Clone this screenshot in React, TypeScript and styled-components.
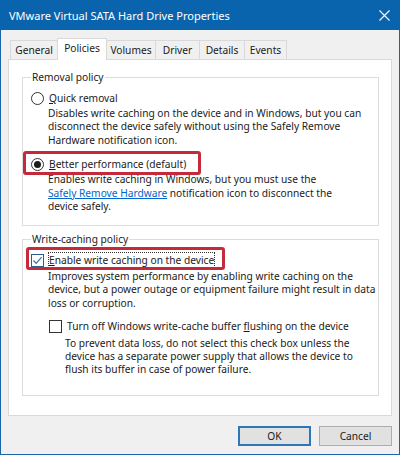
import * as React from "react";
import styled, { createGlobalStyle } from "styled-components";

const GlobalStyle = createGlobalStyle`
  html, body {
    margin: 0;
    padding: 0;
    background: #f0f0f0;
  }
  * {
    box-sizing: border-box;
  }
`;

const Window = styled.div`
  width: 400px;
  height: 455px;
  display: flex;
  flex-direction: column;
  background: #f0f0f0;
  border: 1px solid #1a64a8;
  border-top: none;
  font-family: "Noto Sans", "Open Sans", sans-serif;
  font-size: 10.2px;
  color: #1b1b1b;
`;

const TitleBar = styled.div`
  height: 30px;
  flex: none;
  display: flex;
  align-items: center;
  justify-content: space-between;
  background: #0a64ad;
  color: #ffffff;
  padding: 0 9px 0 9px;
  margin: 0 -1px;
  font-size: 11px;
`;

const CloseButton = styled.div`
  width: 14px;
  height: 14px;
  display: flex;
  align-items: center;
  justify-content: center;
`;

const Body = styled.div`
  flex: 1;
  display: flex;
  flex-direction: column;
  padding: 8px 7px 0 7px;
`;

const TabStrip = styled.div`
  display: flex;
  align-items: flex-end;
  height: 21px;
  padding-left: 2px;
  position: relative;
  z-index: 1;
`;

const Tab = styled.div<{ $width: number; $active?: boolean; $last?: boolean; $afterActive?: boolean }>`
  width: ${(p) => p.$width}px;
  height: ${(p) => (p.$active ? 22 : 19)}px;
  margin-bottom: ${(p) => (p.$active ? -1 : 0)}px;
  display: flex;
  align-items: center;
  justify-content: center;
  padding-bottom: ${(p) => (p.$active ? 3 : 0)}px;
  background: ${(p) => (p.$active ? "#ffffff" : "#f0f0f0")};
  border: 1px solid #d9d9d9;
  border-bottom: none;
  border-right: ${(p) => (p.$last || p.$active ? "1px solid #d9d9d9" : "none")};
  border-left: ${(p) => (p.$afterActive ? "none" : "1px solid #d9d9d9")};
  cursor: default;
`;

const Panel = styled.div`
  height: 357px;
  display: flex;
  flex-direction: column;
  gap: 6px;
  background: #ffffff;
  border: 1px solid #d9d9d9;
  padding: 10px 12px 19px 13px;
`;

const Group = styled.fieldset<{ $grow?: boolean }>`
  margin: 0;
  border: 1px solid #dcdcdc;
  padding: 6px 0 0 8px;
  flex: ${(p) => (p.$grow ? 1 : "none")};
  padding-bottom: ${(p) => (p.$grow ? 0 : 12)}px;
  min-width: 0;
`;

const Legend = styled.legend`
  padding: 0 1px;
  margin-left: 0;
  line-height: 14px;
`;

const OptionRow = styled.div<{ $indent?: number; $gapTop?: number }>`
  display: inline-flex;
  align-items: center;
  gap: 4px;
  height: 16px;
  margin-left: ${(p) => p.$indent ?? 0}px;
  margin-top: ${(p) => p.$gapTop ?? 0}px;
  position: relative;
  line-height: 16px;
  white-space: nowrap;
  cursor: default;
`;

const Highlight = styled.div<{ $top: number; $right: number; $bottom: number; $left: number }>`
  position: absolute;
  top: ${(p) => -p.$top}px;
  right: ${(p) => -p.$right}px;
  bottom: ${(p) => -p.$bottom}px;
  left: ${(p) => -p.$left}px;
  border: 3px solid #c52a3a;
  border-radius: 3px;
  pointer-events: none;
`;

const Radio = styled.span<{ $checked?: boolean }>`
  width: 13px;
  height: 13px;
  flex: none;
  border-radius: 50%;
  border: 1px solid #333333;
  background: #ffffff;
  display: flex;
  align-items: center;
  justify-content: center;
  &::after {
    content: "";
    width: 7px;
    height: 7px;
    border-radius: 50%;
    background: ${(p) => (p.$checked ? "#1b1b1b" : "transparent")};
  }
`;

const Checkbox = styled.span<{ $checked?: boolean }>`
  width: 13px;
  height: 13px;
  flex: none;
  border: 1px solid ${(p) => (p.$checked ? "#2a5d94" : "#333333")};
  background: #ffffff;
  display: flex;
  align-items: center;
  justify-content: center;
`;

const Label = styled.span<{ $focused?: boolean }>`
  outline: ${(p) => (p.$focused ? "1px dotted #333333" : "none")};
  outline-offset: -1px;
  padding: 0 1px;
`;

const Key = styled.span`
  text-decoration: underline;
  text-underline-offset: 1px;
`;

const Description = styled.div<{ $indent: number }>`
  margin-left: ${(p) => p.$indent}px;
  line-height: 13.4px;
  padding-top: 1px;
`;

const HardwareLink = styled.span`
  color: #0066cc;
  text-decoration: underline;
  text-underline-offset: 1px;
  cursor: pointer;
`;

const Footer = styled.div`
  display: flex;
  justify-content: flex-end;
  gap: 8px;
  padding: 10px 0 8px 0;
`;

const Button = styled.button<{ $primary?: boolean }>`
  width: 73px;
  height: 20px;
  margin: 0;
  padding: 0;
  font: inherit;
  color: #1b1b1b;
  background: #e1e1e1;
  border: ${(p) => (p.$primary ? "2px solid #2f76b8" : "1px solid #adadad")};
`;

const CheckMark = () => (
  <svg width="11" height="11" viewBox="0 0 11 11">
    <path d="M1.5 5.5L4.2 8.4L9.6 2.2" fill="none" stroke="#2f6db5" strokeWidth="1.2" />
  </svg>
);

const tabs = [
  { name: "General", width: 47 },
  { name: "Policies", width: 50 },
  { name: "Volumes", width: 48 },
  { name: "Driver", width: 44 },
  { name: "Details", width: 45 },
  { name: "Events", width: 43 },
];

export default function App() {
  const [active, setActive] = React.useState<number>(1);
  const [quick, setQuick] = React.useState<boolean>(false);
  const [cache, setCache] = React.useState<boolean>(true);
  const [flush, setFlush] = React.useState<boolean>(false);

  return (
    <>
      <GlobalStyle />
      <Window>
        <TitleBar>
          <span>VMware Virtual SATA Hard Drive Properties</span>
          <CloseButton>
            <svg width="11" height="11" viewBox="0 0 11 11">
              <path d="M0.5 0.5L10.5 10.5M10.5 0.5L0.5 10.5" stroke="#ffffff" strokeWidth="1.1" />
            </svg>
          </CloseButton>
        </TitleBar>
        <Body>
          <TabStrip>
            {tabs.map((t, i) => (
              <Tab
                key={t.name}
                $width={t.width}
                $active={i === active}
                $last={i === tabs.length - 1}
                $afterActive={i === active + 1}
                onClick={() => setActive(i)}
              >
                {t.name}
              </Tab>
            ))}
          </TabStrip>
          <Panel>
            <Group>
              <Legend>Removal policy</Legend>
              <OptionRow onClick={() => setQuick(true)}>
                <Radio $checked={quick} />
                <Label>
                  <Key>Q</Key>uick removal
                </Label>
              </OptionRow>
              <Description $indent={17}>
                Disables write caching on the device and in Windows, but you can
                <br />
                disconnect the device safely without using the Safely Remove
                <br />
                Hardware notification icon.
              </Description>
              <OptionRow $gapTop={9} onClick={() => setQuick(false)}>
                <Radio $checked={!quick} />
                <Label>
                  <Key>B</Key>etter performance (default)
                </Label>
                <Highlight $top={5} $right={14} $bottom={3} $left={8} />
              </OptionRow>
              <Description $indent={17}>
                Enables write caching in Windows, but you must use the
                <br />
                <HardwareLink>Safely Remove Hardware</HardwareLink> notification icon to disconnect the
                <br />
                device safely.
              </Description>
            </Group>
            <Group $grow>
              <Legend>Write-caching policy</Legend>
              <OptionRow onClick={() => setCache(!cache)}>
                <Checkbox $checked={cache}>{cache && <CheckMark />}</Checkbox>
                <Label $focused>
                  <Key>E</Key>nable write caching on the device
                </Label>
                <Highlight $top={5} $right={10} $bottom={2} $left={5} />
              </OptionRow>
              <Description $indent={17}>
                Improves system performance by enabling write caching on the
                <br />
                device, but a power outage or equipment failure might result in data
                <br />
                loss or corruption.
              </Description>
              <OptionRow $indent={18} $gapTop={8} onClick={() => setFlush(!flush)}>
                <Checkbox $checked={flush}>{flush && <CheckMark />}</Checkbox>
                <Label>
                  Turn off Windows write-cache buffer <Key>f</Key>lushing on the device
                </Label>
              </OptionRow>
              <Description $indent={34}>
                To prevent data loss, do not select this check box unless the
                <br />
                device has a separate power supply that allows the device to
                <br />
                flush its buffer in case of power failure.
              </Description>
            </Group>
          </Panel>
          <Footer>
            <Button $primary>OK</Button>
            <Button>Cancel</Button>
          </Footer>
        </Body>
      </Window>
    </>
  );
}
